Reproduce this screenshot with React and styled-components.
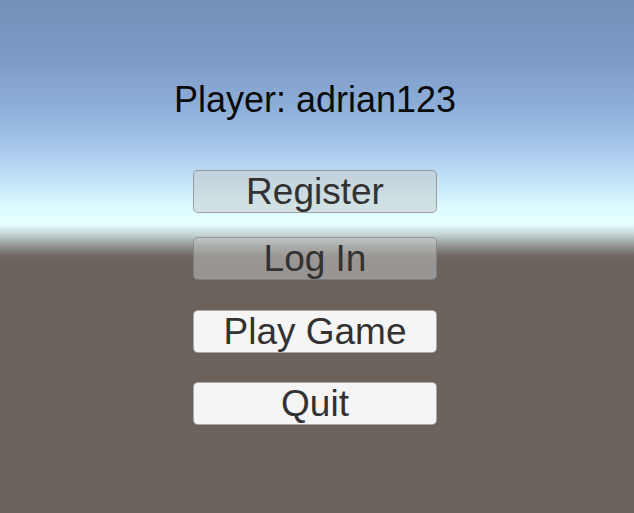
import React from 'react'
import styled, { createGlobalStyle } from 'styled-components'

const GlobalStyle = createGlobalStyle`
html, body {
    margin: 0;
    padding: 0;
}
body {
    font-family: "Liberation Sans", Arial, sans-serif;
}
`

const Scene = styled.div`
min-height: 100vh;
box-sizing: border-box;
display: flex;
flex-direction: column;
align-items: center;
padding: 80px 4px 0 0;
background: linear-gradient(
    to bottom,
    #7390b8 0px,
    #7d9bc7 60px,
    #8fb0da 110px,
    #a8c9ec 150px,
    #c8e7f8 185px,
    #dcfbff 207px,
    #e7feff 224px,
    #c2d1d0 235px,
    #919591 246px,
    #6f6761 256px,
    #6b625c 262px,
    #6a625c 100%
);
`

const PlayerLabel = styled.div`
font-size: 36px;
line-height: 40px;
color: #0a0a0a;
margin-bottom: 50px;
white-space: nowrap;
`

const MenuButton = styled.button`
width: 244px;
height: 43px;
box-sizing: border-box;
margin-top: ${props => props.gap || 0}px;
padding: 0;
border-radius: 5px;
border: 1px solid ${props => (props.disabled ? 'rgba(110, 110, 110, 0.55)' : 'rgba(90, 90, 90, 0.5)')};
background: ${props => (props.disabled ? 'rgba(200, 200, 200, 0.5)' : '#f5f5f5')};
color: #323232;
font-family: "Liberation Sans", Arial, sans-serif;
font-size: 37px;
line-height: 41px;
cursor: ${props => (props.disabled ? 'default' : 'pointer')};
`

const App = () => {
    const buttons = [
        { label: 'Register', disabled: true, gap: 0 },
        { label: 'Log In', disabled: true, gap: 24 },
        { label: 'Play Game', disabled: false, gap: 30 },
        { label: 'Quit', disabled: false, gap: 29 },
    ]

    return (
        <>
            <GlobalStyle />
            <Scene>
                <PlayerLabel>Player: adrian123</PlayerLabel>
                {buttons.map(b =>
                    <MenuButton key={b.label} disabled={b.disabled} gap={b.gap}>{b.label}</MenuButton>
                )}
            </Scene>
        </>
    )
}

export default App
